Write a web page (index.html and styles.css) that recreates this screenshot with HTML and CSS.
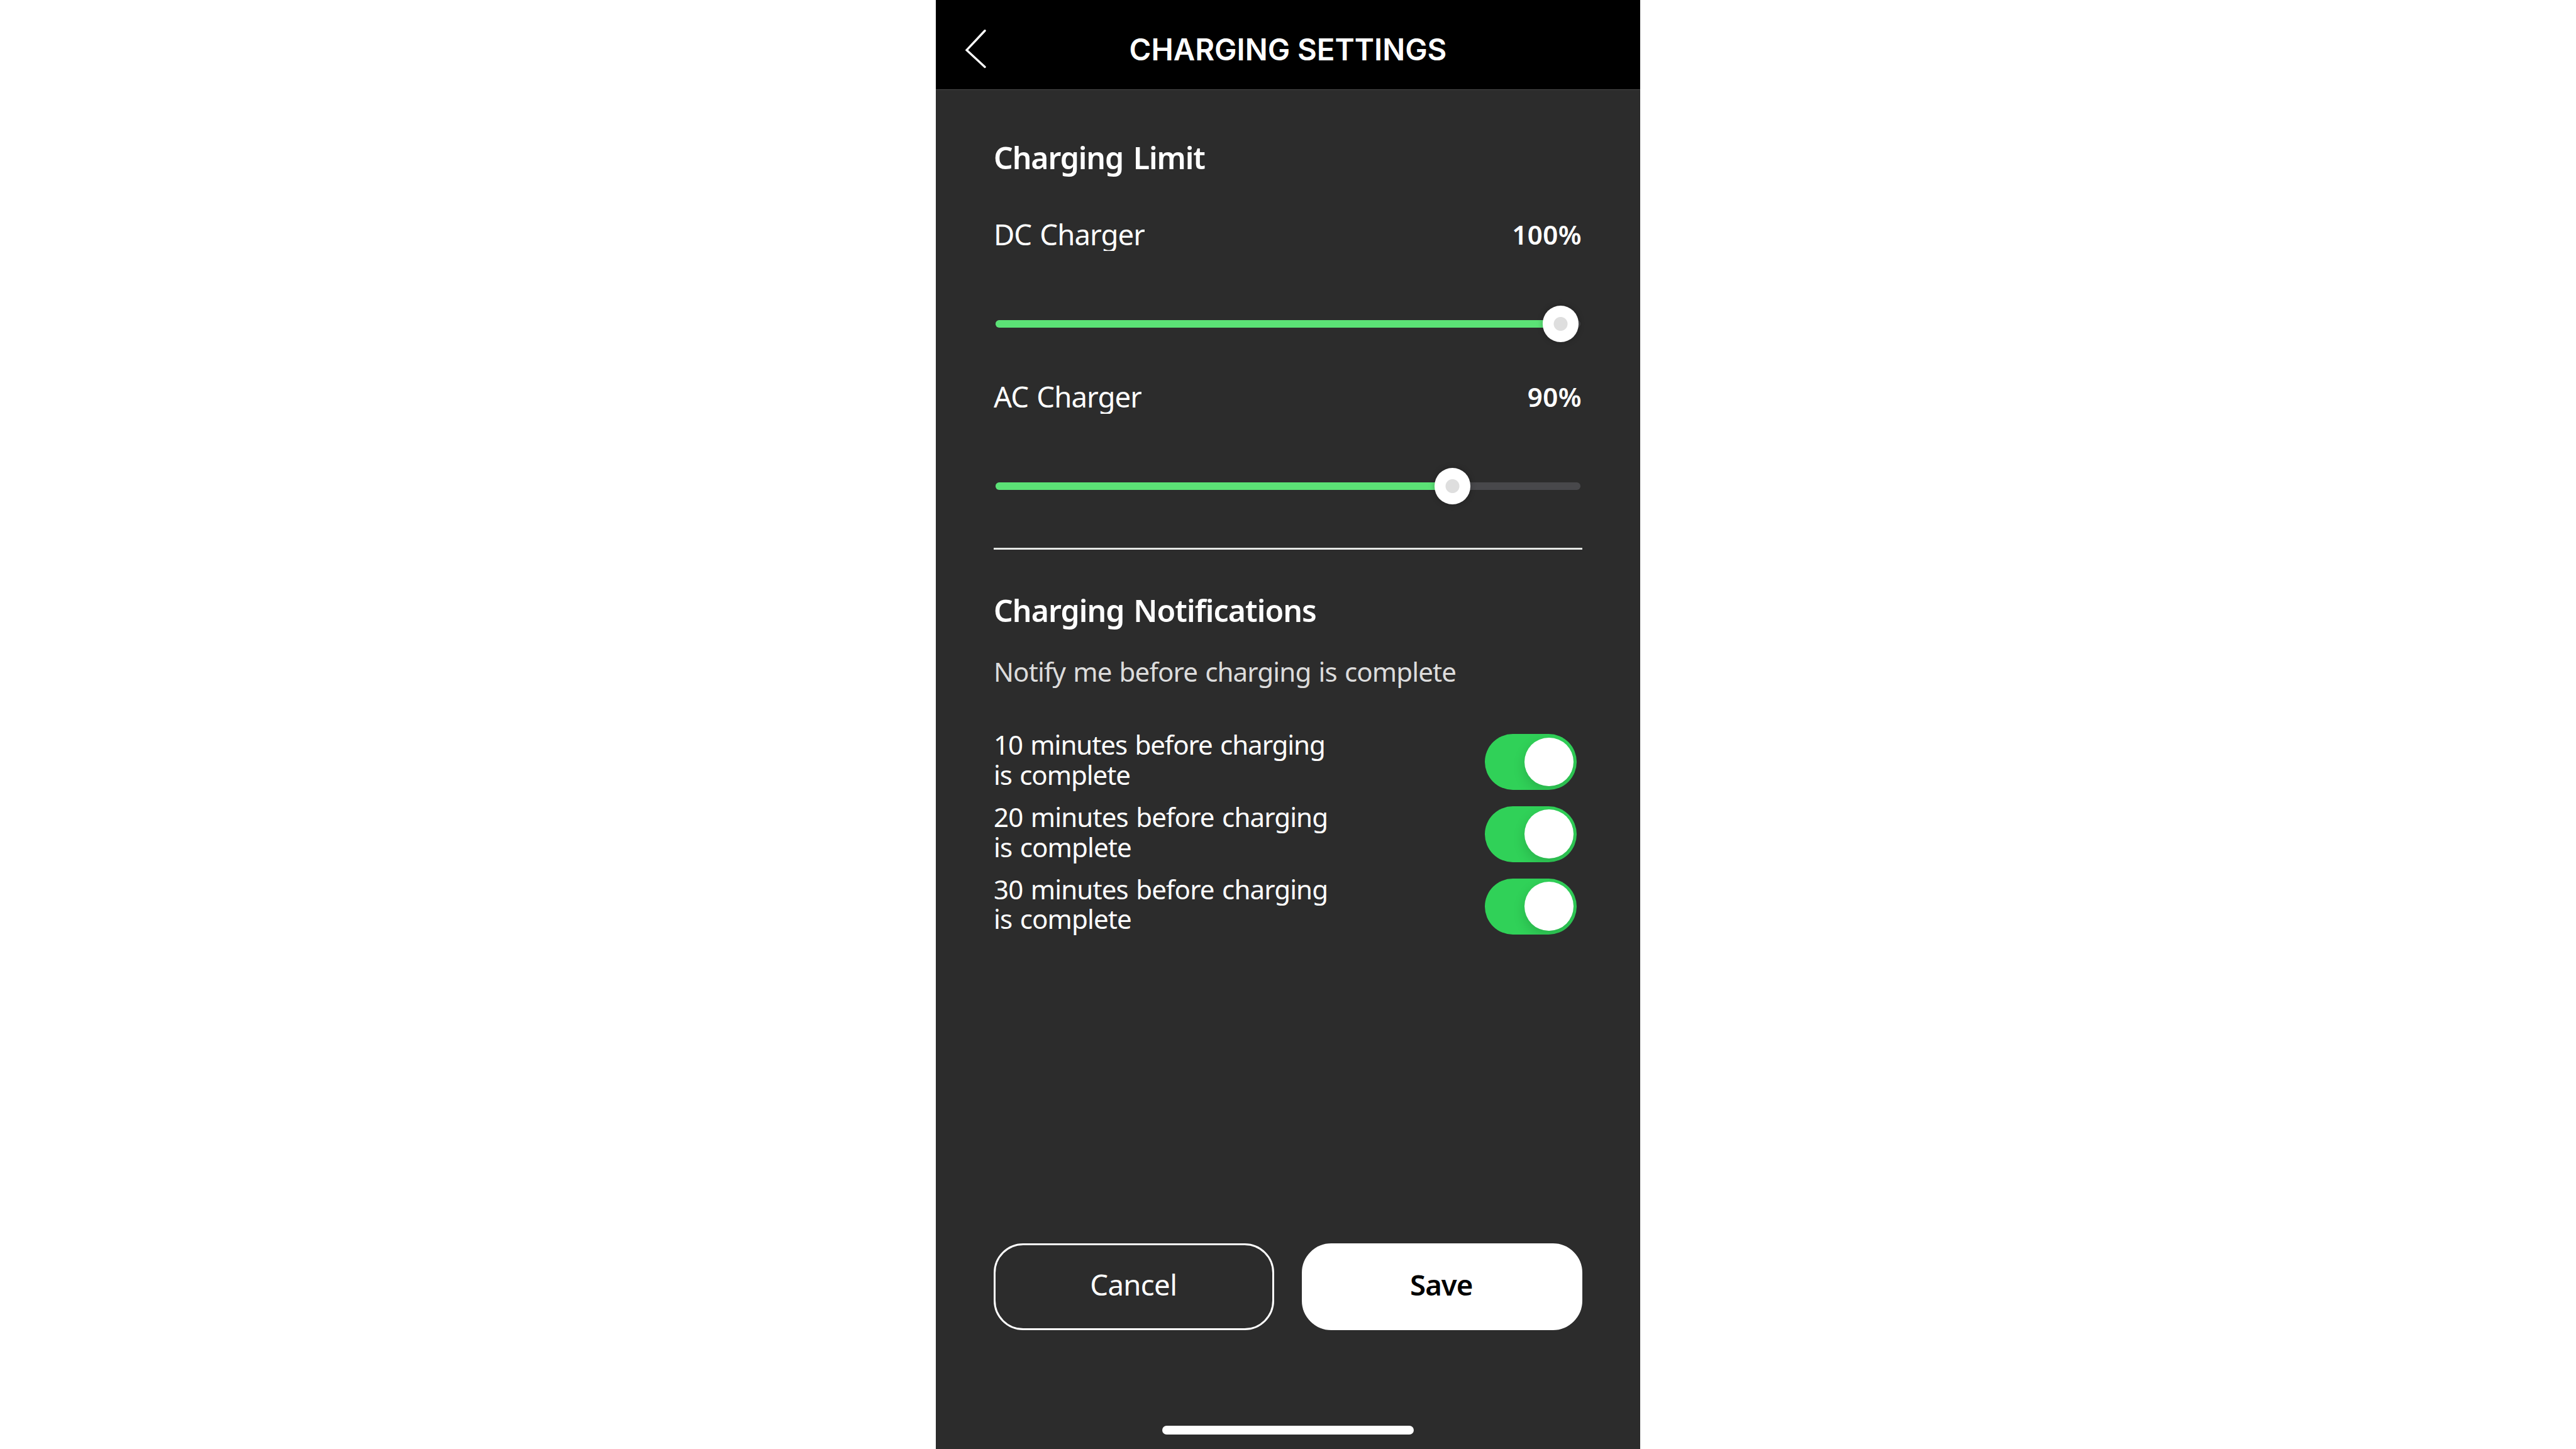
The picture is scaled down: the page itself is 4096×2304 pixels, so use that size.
FILE: index.html
```html
<!DOCTYPE html>
<html lang="en">
<head>
  <meta charset="utf-8">
  <title>Charging Settings</title>
  <link rel="stylesheet" href="styles.css">
</head>
<body>
  <div class="phone">
    <header class="topbar">
      <svg class="back" viewBox="0 0 40 70" fill="none" stroke="#fff" stroke-width="3.6" stroke-linecap="round" aria-label="Back">
        <path d="M35.6 3.9 5.3 36.2 35.6 64.2"/>
      </svg>
      <h1 class="title">CHARGING SETTINGS</h1>
    </header>

    <main class="content">
      <section class="limits">
        <h2 class="heading limits-heading">Charging Limit</h2>
        <div class="charger">
          <div class="charger-row">
            <span class="charger-name">DC Charger</span>
            <span class="charger-value">100%</span>
          </div>
          <div class="slider">
            <div class="track"><div class="fill" style="width: 96.6%"></div></div>
            <div class="thumb" style="left: 96.62%"></div>
          </div>
        </div>
        <div class="charger">
          <div class="charger-row">
            <span class="charger-name">AC Charger</span>
            <span class="charger-value">90%</span>
          </div>
          <div class="slider">
            <div class="track"><div class="fill" style="width: 78.1%"></div></div>
            <div class="thumb" style="left: 78.12%"></div>
          </div>
        </div>
      </section>

      <section class="notifications">
        <h2 class="heading notifications-heading">Charging Notifications</h2>
        <p class="hint">Notify me before charging is complete</p>
        <div class="options">
          <div class="option">
            <span class="option-text first">10 minutes before charging is complete</span>
            <span class="switch"><span class="knob"></span></span>
          </div>
          <div class="option">
            <span class="option-text">20 minutes before charging is complete</span>
            <span class="switch"><span class="knob"></span></span>
          </div>
          <div class="option">
            <span class="option-text">30 minutes before charging is complete</span>
            <span class="switch"><span class="knob"></span></span>
          </div>
        </div>
      </section>

      <div class="actions">
        <button class="button cancel">Cancel</button>
        <button class="button save">Save</button>
      </div>
    </main>
    <div class="home-indicator"></div>
  </div>
</body>
</html>
```
FILE: styles.css
```css
/* 1rem is 1/428 of the window's width, so the whole screen scales with it */
html {
  font-size: calc(100vw / 428);
}

* {
  box-sizing: border-box;
}

body {
  margin: 0;
  background: #fff;
  color: #fff;
  font-family: "Noto Sans", "Open Sans", sans-serif;
}

.phone {
  display: flex;
  flex-direction: column;
  width: 117rem;
  height: 100vh;
  margin: 0 auto;
  background: #2c2c2c;
  overflow: hidden;
}

.topbar {
  display: grid;
  grid-template-columns: 1fr auto 1fr;
  align-items: center;
  height: 14.9rem;
  padding: 1.6rem 4.6rem 0;
  background: #000;
  border-bottom: 1px solid #4a4a4a;
}

.back {
  width: 4rem;
  height: 7rem;
}

.title {
  margin: 0;
  font: 600 4.95rem/6rem "Inter", sans-serif;
}

.content {
  display: flex;
  flex: 1;
  flex-direction: column;
  padding: 8.3rem 9.6rem 0;
}

.heading {
  margin: 0;
  font-size: 5.04rem;
  font-weight: 600;
  line-height: 6rem;
  letter-spacing: -0.019em;
  word-spacing: 0.06em;
}

.limits-heading {
  letter-spacing: -0.023em;
  word-spacing: 0.09em;
}

.limits {
  padding-bottom: 7.2rem;
  border-bottom: 3px solid #e4e7e4;
}

.charger {
  margin-top: 7.12rem;
}

.charger + .charger {
  margin-top: 6.52rem;
}

.charger-row {
  display: flex;
  justify-content: space-between;
  height: 5.4rem;
  line-height: 5.2rem;
}

/* the label box ends just under the baseline and trims its descenders */
.charger-name {
  overflow: hidden;
  font-size: 4.76rem;
  letter-spacing: -0.0205em;
  word-spacing: 0.05em;
}

.charger-value {
  padding-right: 0.1rem;
  font-size: 4.4rem;
  font-weight: 600;
  letter-spacing: 0.01em;
}

.slider {
  position: relative;
  display: flex;
  align-items: center;
  height: 6rem;
  margin: 9.08rem 0.3rem 0;
}

.track {
  width: 100%;
  height: 1.2rem;
  border-radius: 0.6rem;
  background: #48484b;
}

.fill {
  height: 100%;
  border-radius: 0.6rem;
  background: #5be276;
}

.thumb {
  position: absolute;
  top: 0;
  width: 6rem;
  height: 6rem;
  margin-left: -3rem;
  border-radius: 50%;
  background: radial-gradient(circle, #dedede 1.1rem, #fff 1.2rem);
  box-shadow: 0 0 1rem rgba(0, 0, 0, 0.25);
}

.notifications-heading {
  margin-top: 7.15rem;
}

.hint {
  margin: 4.64rem 0 0;
  color: #dcdcdc;
  font-size: 4.4rem;
  line-height: 5rem;
  letter-spacing: -0.0215em;
  word-spacing: 0.05em;
}

.options {
  display: flex;
  flex-direction: column;
  gap: 2rem;
  margin-top: 7rem;
}

.option {
  display: flex;
  justify-content: space-between;
  height: 10rem;
  padding-right: 0.9rem;
}

.option-text {
  width: 57rem;
  margin-top: 0.12rem;
  font-size: 4.4rem;
  line-height: 5rem;
  letter-spacing: -0.022em;
  word-spacing: 0.06em;
}

.option-text.first {
  letter-spacing: -0.026em;
}

.switch {
  display: flex;
  align-items: center;
  justify-content: flex-end;
  width: 15.3rem;
  height: 9.3rem;
  margin-top: 0.84rem;
  padding: 0 0.6rem;
  border-radius: 4.65rem;
  background: #30d158;
  overflow: hidden;
}

.knob {
  width: 8.1rem;
  height: 8.1rem;
  border-radius: 50%;
  background: #fff;
  box-shadow: 0 0.8rem 2rem rgba(0, 0, 0, 0.15);
}

.actions {
  display: grid;
  grid-template-columns: 1fr 1fr;
  gap: 4.5rem;
  margin-top: auto;
  margin-bottom: 15.9rem;
}

.button {
  height: 14.4rem;
  padding: 0 0.2rem 0.6rem 0;
  border: 3px solid #fff;
  border-radius: 4.9rem;
  font-family: inherit;
  font-size: 4.76rem;
  line-height: 6rem;
}

.cancel {
  background: transparent;
  color: #fff;
  letter-spacing: -0.014em;
}

.save {
  background: #fff;
  color: #000;
  font-weight: 600;
  letter-spacing: -0.021em;
}

.home-indicator {
  align-self: center;
  width: 41.7rem;
  height: 1.5rem;
  margin-bottom: 2.4rem;
  border-radius: 0.75rem;
  background: #fff;
}
```
